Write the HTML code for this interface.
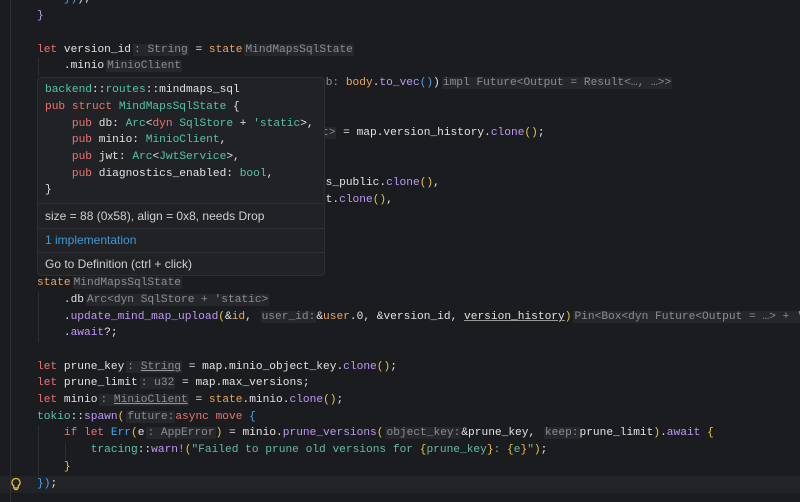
<!DOCTYPE html>
<html><head><meta charset="utf-8"><style>
body{margin:0;width:800px;height:502px;background:#1b1c1f;overflow:hidden;position:relative;font-family:"Liberation Mono",monospace;font-size:11.2px;color:#e2e2e2}
.l{position:absolute;left:37px;height:17px;line-height:17px;white-space:pre}
.k{color:#ec736e}.o{color:#eba660}.m{color:#bf98f6}.t{color:#52c6aa}.y{color:#ecc43c}.b{color:#4aa3f0}.s{color:#62bca3}
.h{color:#8a8e95;background:#25272b;padding:0 1px;margin-left:2px}
.u{text-decoration:underline;text-decoration-color:#999}
.g{position:absolute;width:1px;background:#2e3034}
#pop{position:absolute;left:37px;top:77px;width:286px;height:197px;background:#212225;border:1px solid #2d2f33;border-radius:4px}
#pop .c{position:absolute;left:7px;white-space:pre;line-height:17px}
#pop .x{position:absolute;left:7px;font-family:"Liberation Sans",sans-serif;font-size:12px;color:#cfcfcf}
.sep{position:absolute;left:0;right:0;height:1px;background:#2f3135}
</style></head><body>
<div style="position:absolute;left:0;top:476px;width:800px;height:17px;background:#222327"></div>
<div class="g" style="left:10px;top:0;height:502px"></div>
<div class="g" style="left:38px;top:58px;height:18px"></div>
<div class="g" style="left:38px;top:292px;height:50px"></div>
<div class="g" style="left:38px;top:426px;height:50px"></div>
<div class="g" style="left:65px;top:443px;height:17px"></div>
<div class="l" style="top:-9px">    <span class="b">})</span>);</div>
<div class="l" style="top:8px"><span class="m">}</span></div>
<div class="l" style="top:42px"><span class="k">let</span> version_id<span class="h">: String</span> = <span class="o">state</span><span class="h">MindMapsSqlState</span></div>
<div class="l" style="top:58px">    .minio<span class="h">MinioClient</span></div>
<div class="l" style="top:75px">    .put_version(&amp;obj_key, &amp;version_id, <span style="color:#8a8e95">blob:</span> <span class="o">body</span>.<span class="m">to_vec</span><span class="b">()</span>)<span class="h">impl Future&lt;Output = Result&lt;…, …&gt;&gt;</span></div>
<div class="l" style="top:125px"><span class="k">let</span> version_history<span class="h">: Vec&lt;MapVersionSnapshot&gt;</span> = map.version_history.<span class="m">clone</span><span class="y">()</span>;</div>
<div class="l" style="top:175px">        is_public: mindmap_row.permission.is_public.<span class="m">clone</span><span class="y">()</span>,</div>
<div class="l" style="top:192px">        prompt_context: mind_map_row.context.<span class="m">clone</span><span class="y">()</span>,</div>
<div class="l" style="top:275px"><span class="o">state</span><span class="h">MindMapsSqlState</span></div>
<div class="l" style="top:292px">    .db<span class="h">Arc&lt;dyn SqlStore + 'static&gt;</span></div>
<div class="l" style="top:309px">    .<span class="m">update_mind_map_upload</span><span class="y">(</span>&amp;<span class="o">id</span>, <span class="h">user_id:</span>&amp;<span class="o">user</span>.0, &amp;version_id, <span class="u">version_history</span><span class="y">)</span><span class="h">Pin&lt;Box&lt;dyn Future&lt;Output = …&gt; + '_&gt;&gt;</span></div>
<div class="l" style="top:325px">    .<span class="m">await</span>?;</div>
<div class="l" style="top:359px"><span class="k">let</span> prune_key<span class="h">: <span class="u">String</span></span> = map.minio_object_key.<span class="m">clone</span><span class="y">()</span>;</div>
<div class="l" style="top:375px"><span class="k">let</span> prune_limit<span class="h">: u32</span> = map.max_versions;</div>
<div class="l" style="top:392px"><span class="k">let</span> minio<span class="h">: <span class="u">MinioClient</span></span> = <span class="o">state</span>.minio.<span class="m">clone</span><span class="y">()</span>;</div>
<div class="l" style="top:409px"><span class="t">tokio</span>::<span class="m">spawn</span><span class="y">(</span><span class="h">future:</span><span class="k">async move</span> <span class="b">{</span></div>
<div class="l" style="top:425px">    <span class="k">if let</span> <span class="b">Err</span><span class="y">(</span>e<span class="h">: AppError</span><span class="y">)</span> = minio.<span class="m">prune_versions</span><span class="y">(</span><span class="h">object_key:</span>&amp;prune_key, <span class="h">keep:</span>prune_limit<span class="y">)</span>.<span class="m">await</span> <span class="y">{</span></div>
<div class="l" style="top:442px">        <span class="t">tracing</span>::<span class="m">warn!</span><span class="y">(</span><span class="s">"Failed to prune old versions for </span><span class="y">{</span><span class="s">prune_key</span><span class="y">}</span><span class="s">: </span><span class="y">{</span><span class="s">e</span><span class="y">}</span><span class="s">"</span><span class="y">)</span>;</div>
<div class="l" style="top:459px">    <span class="y">}</span></div>
<div class="l" style="top:476px"><span class="b">})</span>;</div>
<svg style="position:absolute;left:10px;top:477px" width="12" height="15" viewBox="0 0 12 15"><path d="M6 1.5a4 4 0 0 0-2.3 7.3V11h4.6V8.8A4 4 0 0 0 6 1.5z M4.2 12.5h3.6" fill="none" stroke="#e8c13c" stroke-width="1.3"/></svg>
<div id="pop">
<div class="c" style="top:4px"><span class="t">backend</span>::<span class="t">routes</span>::mindmaps_sql</div>
<div class="c" style="top:21px"><span class="k">pub struct</span> <span class="t">MindMapsSqlState</span> {</div>
<div class="c" style="top:38px">    <span class="k">pub</span> db: <span class="t">Arc</span>&lt;<span class="k">dyn</span> <span class="t">SqlStore</span> + <span class="t">'static</span>&gt;,</div>
<div class="c" style="top:54px">    <span class="k">pub</span> minio: <span class="t">MinioClient</span>,</div>
<div class="c" style="top:71px">    <span class="k">pub</span> jwt: <span class="t">Arc</span>&lt;<span class="t">JwtService</span>&gt;,</div>
<div class="c" style="top:88px">    <span class="k">pub</span> diagnostics_enabled: <span class="t">bool</span>,</div>
<div class="c" style="top:104px">}</div>
<div class="sep" style="top:125px"></div>
<div class="x" style="top:131px">size = 88 (0x58), align = 0x8, needs Drop</div>
<div class="sep" style="top:150px"></div>
<div class="x" style="top:155px;color:#3f9ad8">1 implementation</div>
<div class="sep" style="top:174px"></div>
<div class="x" style="top:179px">Go to Definition (ctrl + click)</div>
</div>
</body></html>
